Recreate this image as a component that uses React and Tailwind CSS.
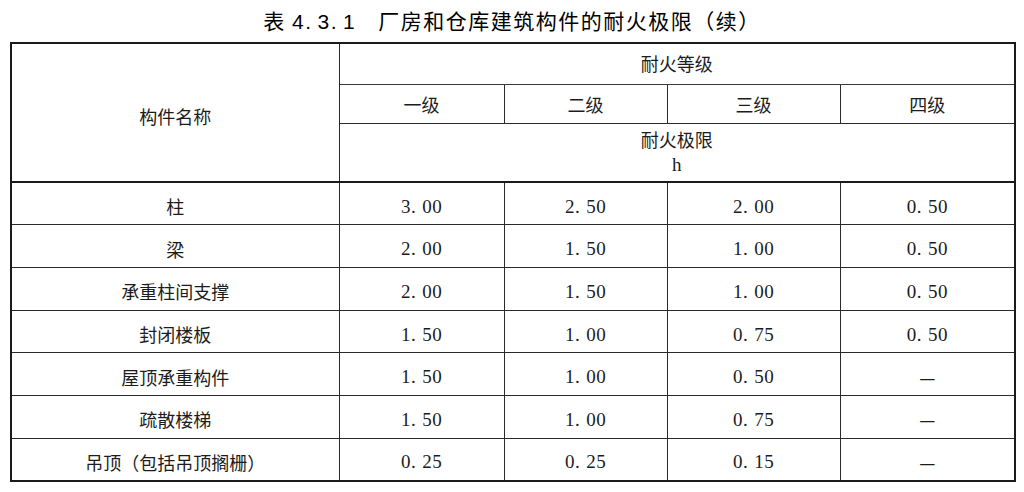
const rows = [
  ["柱", "3.00", "2.50", "2.00", "0.50"],
  ["梁", "2.00", "1.50", "1.00", "0.50"],
  ["承重柱间支撑", "2.00", "1.50", "1.00", "0.50"],
  ["封闭楼板", "1.50", "1.00", "0.75", "0.50"],
  ["屋顶承重构件", "1.50", "1.00", "0.50", "—"],
  ["疏散楼梯", "1.50", "1.00", "0.75", "—"],
  ["吊顶（包括吊顶搁栅）", "0.25", "0.25", "0.15", "—"],
];

const cjk = "font-['Noto_Sans_CJK_SC',sans-serif]";
const num = "font-['Liberation_Serif','Noto_Sans_CJK_SC',serif] text-[19px] tracking-[0.5px]";

function Num({ v }) {
  if (v === "—") return <span className={`${cjk} text-[18px]`}>—</span>;
  const [a, b] = v.split(".");
  return (
    <span className={num}>
      {a}.<span className="ml-[6px]">{b}</span>
    </span>
  );
}

export default function App() {
  return (
    <div className="w-[1024px] h-[492px] bg-white text-[#1c1c1c] overflow-hidden">
      <h1 className={`${cjk} h-[42px] pt-[5px] text-center text-[21px] font-normal leading-[30px] tracking-[1.5px] text-black`}>
        表 <span className="font-['Liberation_Sans',sans-serif]">4.<span className="ml-[5px]">3.</span><span className="ml-[5px]">1</span></span>
        <span className="ml-[22px]">厂房和仓库建筑构件的耐火极限（续）</span>
      </h1>
      <table className={`${cjk} ml-[10px] w-[1004px] table-fixed border-collapse border-[2px] border-[#1a1a1a] text-[18px]`}>
        <colgroup>
          <col className="w-[328px]" />
          <col className="w-[165px]" />
          <col className="w-[163px]" />
          <col className="w-[173px]" />
          <col className="w-[175px]" />
        </colgroup>
        <thead>
          <tr className="h-[41px]">
            <th rowSpan={3} className="border-r border-b-[2px] border-[#2a2a2a] border-b-[#1a1a1a] pt-2 font-normal">
              构件名称
            </th>
            <th colSpan={4} className="border-b border-[#3a3a3a] font-normal">
              耐火等级
            </th>
          </tr>
          <tr className="h-[39px]">
            {["一级", "二级", "三级", "四级"].map((t) => (
              <th key={t} className="border-r border-b border-[#2a2a2a] pt-[2px] font-normal last:border-r-0">
                {t}
              </th>
            ))}
          </tr>
          <tr className="h-[59px]">
            <th colSpan={4} className="border-b-[2px] border-[#1a1a1a] font-normal leading-[25px]">
              <div>耐火极限</div>
              <div className="font-['Liberation_Serif',serif] text-[19px]">h</div>
            </th>
          </tr>
        </thead>
        <tbody>
          {rows.map((r, i) => (
            <tr key={i} className="h-[42.7px]">
              <td className="border-r border-b border-[#2a2a2a] pt-[6px] text-center">{r[0]}</td>
              {r.slice(1).map((v, j) => (
                <td key={j} className="border-r border-b border-[#2a2a2a] pt-[6px] text-center last:border-r-0">
                  <Num v={v} />
                </td>
              ))}
            </tr>
          ))}
        </tbody>
      </table>
    </div>
  );
}
